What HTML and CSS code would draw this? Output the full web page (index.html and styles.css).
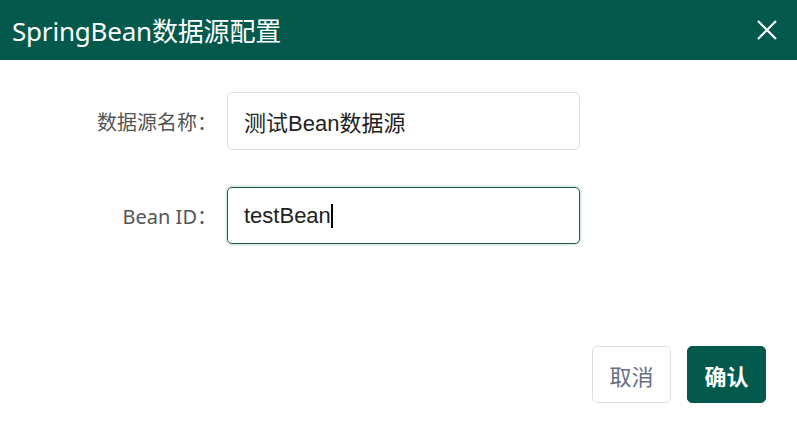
FILE: index.html
```html
<!DOCTYPE html>
<html lang="zh">
<head>
<meta charset="utf-8">
<link rel="stylesheet" href="styles.css">
</head>
<body>
<div class="dialog">
  <header class="header">
    <h1 class="title">SpringBean数据源配置</h1>
    <button class="close" aria-label="关闭">
      <svg width="22" height="22" viewBox="0 0 22 22"><path d="M2 2 L20 20 M20 2 L2 20" stroke="#fff" stroke-width="2.2" fill="none"/></svg>
    </button>
  </header>
  <main class="body">
    <div class="row">
      <label class="label">数据源名称：</label>
      <div class="field">测试Bean数据源</div>
    </div>
    <div class="row">
      <label class="label">Bean ID：</label>
      <div class="field focused">testBean<span class="caret"></span></div>
    </div>
  </main>
  <footer class="footer">
    <button class="btn cancel">取消</button>
    <button class="btn ok">确认</button>
  </footer>
</div>
</body>
</html>
```
FILE: styles.css
```css
* { box-sizing: border-box; }
html, body { margin: 0; padding: 0; background: #fff; }
body { font-family: "Noto Sans", "Noto Sans CJK SC", sans-serif; }
.dialog { width: 797px; height: 432px; display: flex; flex-direction: column; }
.header {
  height: 60px; background: #03594c; display: flex; align-items: center;
  justify-content: space-between; padding: 0 19px 0 12px;
}
.title { margin: 0; color: #fff; font-size: 26px; font-weight: 400; letter-spacing: -0.2px; }
.close { background: none; border: 0; padding: 0; width: 22px; height: 22px; display: flex; }
.body { padding-top: 32px; display: flex; flex-direction: column; gap: 37px; }
.row { display: flex; align-items: center; }
.label {
  width: 227px; padding-right: 10px; text-align: right; font-size: 20px; color: #555;
  font-family: "Noto Sans", "Noto Sans CJK SC", sans-serif; white-space: nowrap;
}
.field {
  width: 353px; height: 58px; border: 1px solid #dcdfe6; border-radius: 5px;
  padding: 0 16px; display: flex; align-items: center; font-size: 22px; color: #222;
  font-family: "Liberation Sans", "Noto Sans CJK SC", sans-serif;
}
.field.focused { border-color: #1e5b52; box-shadow: 0 0 3px rgba(3, 89, 76, 0.45); height: 57px; }
.caret { display: inline-block; width: 2px; height: 24px; background: #000; margin-left: 0; }
.footer { margin-top: auto; display: flex; justify-content: flex-end; gap: 16px; padding: 0 31px 29px 0; }
.btn {
  width: 79px; height: 57px; border-radius: 5px; font-size: 22px;
  font-family: "Noto Sans CJK SC", sans-serif; cursor: pointer; padding: 0;
}
.cancel { background: #fff; border: 1px solid #dcdfe6; color: #667085; }
.ok { background: #03594c; border: 1px solid #03594c; color: #fff; font-weight: 700; }
```
